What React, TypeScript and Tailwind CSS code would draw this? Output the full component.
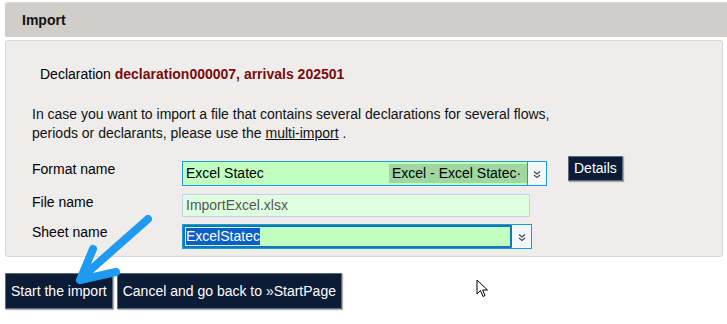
import React from 'react';

const Chevron = () => (
  <svg width="12" height="12" viewBox="0 0 12 12" fill="none" stroke="#3a4a5a" strokeWidth="1.2">
    <path d="M3 3.5 L6 6 L9 3.5" />
    <path d="M3 7 L6 9.5 L9 7" />
  </svg>
);

export default function App() {
  return (
    <div className="relative w-[727px] h-[324px] bg-white overflow-hidden text-[14px] text-black" style={{ fontFamily: '"Liberation Sans", Arial, sans-serif' }}>
      {/* Header */}
      <div className="mt-[2px] ml-[5px] h-[35px] bg-[#d1cdcb] rounded-tl-[3px] border-t border-[#dcd9d7] flex items-center pl-[17px]">
        <span className="font-bold text-[14px] text-[#111]">Import</span>
      </div>

      {/* Panel */}
      <div className="mt-[3px] ml-[5px] w-[718px] h-[217px] bg-[#eeedeb] border border-[#d9d7d5] rounded-[3px] pt-[25px]">
        <p className="pl-[34px] leading-[16px]">
          Declaration <span className="font-bold text-[#7a0b0b]">declaration000007, arrivals 202501</span>
        </p>

        <p className="pl-[26px] mt-[23px] leading-[19px] text-[#111]">
          In case you want to import a file that contains several declarations for several flows,
          <br />
          periods or declarants, please use the <span className="underline">multi-import</span> .
        </p>

        <div className="mt-[18px] flex flex-col">
          {/* Format name */}
          <div className="flex items-start h-[25px]">
            <div className="w-[176px] pl-[26px] leading-[16px]">Format name</div>
            <div className="w-[365px] h-[25px] flex border border-[#1b9bd7] bg-[#c0ffc0]">
              <div className="flex-1 flex items-center pl-[3px]">Excel Statec</div>
              <div className="my-[2px] w-[138px] bg-[#a0d6a0] flex items-center pl-[3px] whitespace-nowrap overflow-hidden">
                Excel - Excel Statec·
              </div>
              <div className="w-[19px] bg-[#f4f7f9] border-l border-[#1b9bd7] flex items-center justify-center">
                <Chevron />
              </div>
            </div>
            <button className="ml-[21px] -mt-[5px] h-[25px] px-[5px] bg-[#0d1c36] text-white border border-[#5d6a7c] text-[14px] shadow-[1px_1px_1px_rgba(0,0,0,0.3)]">
              Details
            </button>
          </div>

          {/* File name */}
          <div className="flex items-start h-[23px] mt-[8px]">
            <div className="w-[176px] pl-[26px] leading-[16px]">File name</div>
            <div className="w-[348px] h-[23px] border border-[#c7cdf0] bg-[#e0ffe0] flex items-center pl-[3px] text-[#555]">
              ImportExcel.xlsx
            </div>
          </div>

          {/* Sheet name */}
          <div className="flex items-start h-[25px] mt-[7px]">
            <div className="w-[176px] pl-[26px] leading-[16px]">Sheet name</div>
            <div className="w-[350px] h-[25px] flex border border-[#1b9bd7] bg-[#f4f7f9]">
              <div className="flex-1 bg-[#c0ffc0] border-2 border-[#1377b8] rounded-[1px] flex items-center pl-[1px]">
                <span className="bg-[#0a5fc8] text-white leading-[17px]">ExcelStatec</span>
              </div>
              <div className="w-[19px] flex items-center justify-center">
                <Chevron />
              </div>
            </div>
          </div>
        </div>
      </div>

      {/* Buttons */}
      <div className="mt-[16px] ml-[5px] flex gap-[4px]">
        <button className="h-[36px] px-[5px] bg-[#0d1c36] text-white border border-[#5d6a7c] text-[14px] shadow-[1px_1px_1px_rgba(0,0,0,0.3)]">
          Start the import
        </button>
        <button className="h-[36px] px-[5px] bg-[#0d1c36] text-white border border-[#5d6a7c] text-[14px] shadow-[1px_1px_1px_rgba(0,0,0,0.3)]">
          Cancel and go back to »StartPage
        </button>
      </div>

      {/* Annotation arrow */}
      <svg className="absolute left-0 top-0 pointer-events-none" width="727" height="324">
        <path d="M148 219 L88 272" stroke="#1e9af0" strokeWidth="8" strokeLinecap="round" fill="none" />
        <path d="M93 249 L80 280 L116 272" stroke="#1e9af0" strokeWidth="8" strokeLinecap="round" strokeLinejoin="round" fill="none" />
      </svg>

      {/* Mouse cursor */}
      <svg className="absolute left-[476px] top-[279px]" width="14" height="20" viewBox="0 0 14 20">
        <path d="M1 1 L1 15 L4.5 11.5 L7 17.5 L9 16.5 L6.7 11 L11.5 11 Z" fill="white" stroke="black" strokeWidth="1" strokeLinejoin="round" />
      </svg>
    </div>
  );
}
